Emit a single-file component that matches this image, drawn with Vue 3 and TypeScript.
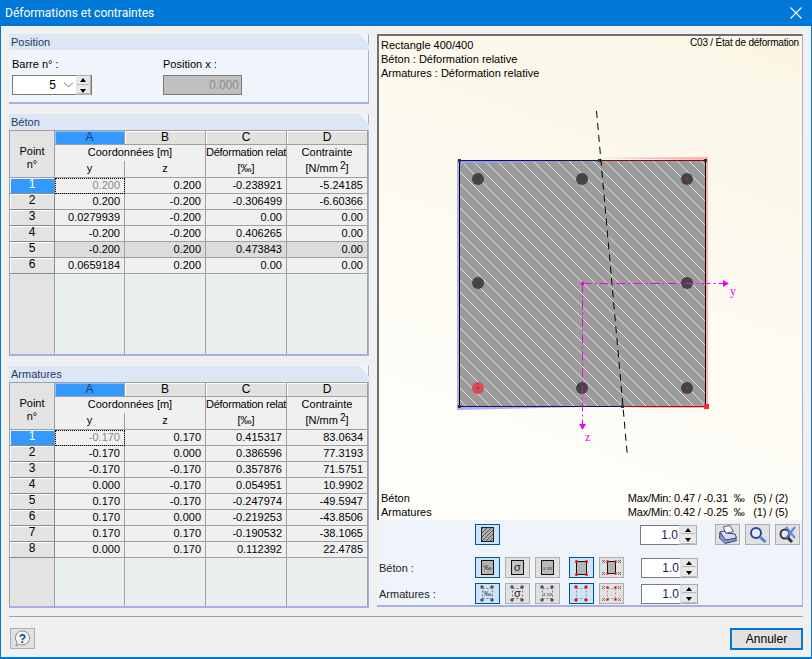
<script setup lang="ts">
type Row = string[];

const betonRows: Row[] = [
  ['0.200', '0.200', '-0.238921', '-5.24185'],
  ['0.200', '-0.200', '-0.306499', '-6.60366'],
  ['0.0279939', '-0.200', '0.00', '0.00'],
  ['-0.200', '-0.200', '0.406265', '0.00'],
  ['-0.200', '0.200', '0.473843', '0.00'],
  ['0.0659184', '0.200', '0.00', '0.00'],
];
const armatureRows: Row[] = [
  ['-0.170', '0.170', '0.415317', '83.0634'],
  ['-0.170', '0.000', '0.386596', '77.3193'],
  ['-0.170', '-0.170', '0.357876', '71.5751'],
  ['0.000', '-0.170', '0.054951', '10.9902'],
  ['0.170', '-0.170', '-0.247974', '-49.5947'],
  ['0.170', '0.000', '-0.219253', '-43.8506'],
  ['0.170', '0.170', '-0.190532', '-38.1065'],
  ['0.000', '0.170', '0.112392', '22.4785'],
];
const tables = [
  { title: 'Béton', rows: betonRows, filler: 80, shaded: 4 },
  { title: 'Armatures', rows: armatureRows, filler: 48, shaded: -1 },
];
const letters = ['B', 'C', 'D'];

const bars = [
  { x: 478, y: 179, fill: '#444', dot: '#2a2ad0' },
  { x: 582, y: 179, fill: '#444', dot: '#444' },
  { x: 687, y: 179, fill: '#444', dot: '#d02a2a' },
  { x: 478, y: 283, fill: '#444', dot: '#2a2ad0' },
  { x: 687, y: 283, fill: '#444', dot: '#555' },
  { x: 478, y: 388, fill: '#dc4a4e', dot: '#4a2ad0' },
  { x: 582, y: 388, fill: '#444', dot: '#444' },
  { x: 687, y: 388, fill: '#444', dot: '#d02a2a' },
];
const corners = [[7, 4], [17, 4], [7, 17], [17, 17]];
</script>

<template>
  <div class="window">
    <div class="titlebar">
      <span>Déformations et contraintes</span>
      <svg class="close" width="12" height="12" viewBox="0 0 12 12">
        <path d="M.5.5l11 11M11.500.5l-11 11" stroke="#fff" stroke-width="1.1" fill="none" />
      </svg>
    </div>

    <div class="content">
      <div class="left">
        <section class="panel position">
          <h2 class="head">Position</h2>
          <div class="position-body">
            <div class="field">
              <label>Barre n° :</label>
              <div class="select">
                <span class="select-value">5</span>
                <svg width="11" height="6" viewBox="0 0 11 6" class="chevron"><path d="M1 .5l4.500 4.500L10 .5" stroke="#777" fill="none" /></svg>
                <div class="spin small"><i class="up"></i><i class="down"></i></div>
              </div>
            </div>
            <div class="field">
              <label>Position x :</label>
              <div class="disabled-input">0.000</div>
            </div>
          </div>
        </section>

        <section v-for="t in tables" :key="t.title" class="panel data">
          <h2 class="head">{{ t.title }}</h2>
          <div class="table">
            <div class="corner">Point<br />n°</div>
            <div class="letter active">A</div>
            <div v-for="l in letters" :key="l" class="letter">{{ l }}</div>

            <div class="h1 span2">Coordonnées [m]</div>
            <div class="h1 tight">Déformation relat</div>
            <div class="h1">Contrainte</div>
            <div class="h2">y</div>
            <div class="h2">z</div>
            <div class="h2">[‰]</div>
            <div class="h2">[N/mm<sup>2</sup>]</div>

            <template v-for="(row, i) in t.rows" :key="i">
              <div class="rowhead" :class="{ current: i === 0 }">{{ i + 1 }}</div>
              <div
                v-for="(val, j) in row"
                :key="j"
                class="cell"
                :class="{ focus: i === 0 && j === 0, shaded: i === t.shaded }"
              >{{ val }}</div>
            </template>

            <div class="fill-head" :style="{ height: t.filler + 'px' }"></div>
            <div class="fill"></div>
            <div class="fill"></div>
            <div class="fill"></div>
            <div class="fill"></div>
          </div>
        </section>
      </div>

      <div class="right">
        <div class="canvas">
          <svg class="drawing" width="426" height="486" viewBox="377 34 426 486">
            <defs>
              <pattern id="hatch" patternUnits="userSpaceOnUse" width="12" height="12">
                <rect width="12" height="12" fill="#9b9b9b" />
                <path d="M-1-1l14 14M-1 11l2 2M11-1l2 2" stroke="#e2e2e2" stroke-width="1" />
              </pattern>
            </defs>
            <rect x="459.500" y="160.500" width="246" height="246" fill="url(#hatch)" />
            <polygon points="457,160 600,160 460,164 460,406 622,406 457,410" fill="#9a9af0" fill-opacity=".8" />
            <polygon points="600,158 708,157 708,408 622,408 705,405 705,160" fill="#ffa0a0" fill-opacity=".8" />
            <path d="M459.500 406.500V160.500" stroke="#000" fill="none" />
            <path d="M459 160.500H600" stroke="#101060" fill="none" />
            <path d="M705.500 160V406" stroke="#000" fill="none" />
            <path d="M600 160.500H705" stroke="#701010" fill="none" />
            <path d="M622 406.500H705" stroke="#a01010" fill="none" />
            <path d="M460 406.500H622" stroke="#101060" fill="none" />
            <rect x="704" y="404" width="5" height="5" fill="#f03030" />
            <g fill="#333">
              <rect x="458" y="159" width="3" height="3" />
              <rect x="704" y="159" width="3" height="3" />
              <rect x="598" y="159" width="3" height="3" />
              <rect x="621" y="405" width="3" height="3" />
              <rect x="458" y="405" width="3" height="3" />
            </g>
            <g v-for="b in bars" :key="b.x + '-' + b.y">
              <circle :cx="b.x" :cy="b.y" r="6" :fill="b.fill" />
              <circle :cx="b.x" :cy="b.y" r="1" :fill="b.dot" />
            </g>
            <path d="M596.500 111L627.500 457" stroke="#000" stroke-dasharray="7 5" fill="none" />
            <path d="M582.500 283.500H725" stroke="#f000f0" stroke-dasharray="9 3 2 3" fill="none" />
            <path d="M582.500 283.500V426" stroke="#f000f0" stroke-dasharray="9 3 2 3" fill="none" />
            <polygon points="723,280 729,283.500 723,287" fill="#f000f0" />
            <polygon points="579,424 586,424 582.500,430" fill="#f000f0" />
            <rect x="581" y="282" width="3" height="3" fill="#f000f0" />
            <text x="730" y="295" class="axis">y</text>
            <text x="585" y="441" class="axis">z</text>
          </svg>

          <div class="info">
            <div>Rectangle 400/400</div>
            <div>Béton : Déformation relative</div>
            <div>Armatures : Déformation relative</div>
          </div>
          <div class="case">C03 / État de déformation</div>

          <div class="legend">
            <div class="legend-row"><span>Béton</span><span class="minmax">Max/Min: 0.47 / -0.31 &nbsp;‰ &nbsp; (5) / (2)</span></div>
            <div class="legend-row"><span>Armatures</span><span class="minmax">Max/Min: 0.42 / -0.25 &nbsp;‰ &nbsp; (1) / (5)</span></div>
          </div>
        </div>

        <div class="controls">
          <div class="ctl-row first">
            <span class="ctl-label"></span>
            <button class="tool on">
              <svg width="23" height="19" viewBox="1 1 23 19">
                <defs>
                  <pattern id="hatch-icon" patternUnits="userSpaceOnUse" width="4" height="4">
                    <rect width="4" height="4" fill="#b0b0b0" />
                    <path d="M-1 5L5-1M-1 1l2-2M3 5l2-2" stroke="#555" />
                  </pattern>
                </defs>
                <rect x="6.500" y="3.500" width="12" height="14" fill="url(#hatch-icon)" stroke="#222" />
              </svg>
            </button>
            <div class="spinner after-one"><span>1.0</span><div class="spin"><i class="up"></i><i class="down"></i></div></div>
            <button class="tool">
              <svg width="23" height="19" viewBox="1 1 23 19">
                <path d="M8 3l7-1.500 3.500 6-7.500 2z" fill="#fafaff" stroke="#5a6090" />
                <path d="M5 8l5 7 10-2 1.500 3.500L10 19.500 4.500 14z" fill="#8f98d8" stroke="#3c4270" />
                <path d="M5 8l4-1 2 2 9 1 1.500 4-11 2z" fill="#d8dcf4" stroke="#3c4270" />
              </svg>
            </button>
            <button class="tool">
              <svg width="23" height="19" viewBox="1 1 23 19">
                <circle cx="11" cy="9" r="5" fill="#e4ecfb" stroke="#27479a" stroke-width="2" />
                <path d="M15 13l5.500 5" stroke="#4f86d8" stroke-width="3" />
              </svg>
            </button>
            <button class="tool">
              <svg width="23" height="19" viewBox="1 1 23 19">
                <circle cx="10" cy="10" r="4.500" fill="#e4ecfb" stroke="#333" stroke-width="2" />
                <path d="M13 14l4 4" stroke="#333" stroke-width="3" />
                <path d="M11 3l9 11M20 3l-9 11" stroke="#5f86dc" stroke-width="2" />
              </svg>
            </button>
          </div>

          <div class="ctl-row second">
            <span class="ctl-label">Béton :</span>
            <button class="tool on">
              <svg width="23" height="19" viewBox="1 1 23 19">
                <rect x="6.500" y="3.500" width="12" height="14" fill="#b4b4b4" stroke="#111" />
                <text x="12.500" y="13" class="mini">‰</text>
              </svg>
            </button>
            <button class="tool">
              <svg width="23" height="19" viewBox="1 1 23 19">
                <rect x="6.500" y="3.500" width="12" height="14" fill="#c4c4c4" stroke="#111" />
                <text x="12.500" y="14" class="sigma">σ</text>
              </svg>
            </button>
            <button class="tool">
              <svg width="23" height="19" viewBox="1 1 23 19">
                <rect x="6.500" y="3.500" width="12" height="14" fill="#b8b8b8" stroke="#111" />
                <text x="12.500" y="12.500" class="tiny">x.xx</text>
              </svg>
            </button>
            <button class="tool on gap-left">
              <svg width="23" height="19" viewBox="1 1 23 19">
                <rect x="7.500" y="4.500" width="10" height="13" fill="#b4b4b4" stroke="#111" />
                <g fill="#e01010">
                  <circle cx="7.500" cy="4.500" r="1.500" /><circle cx="17.500" cy="4.500" r="1.500" />
                  <circle cx="7.500" cy="17.500" r="1.500" /><circle cx="17.500" cy="17.500" r="1.500" />
                </g>
              </svg>
            </button>
            <button class="tool">
              <svg width="23" height="19" viewBox="1 1 23 19">
                <rect x="8.500" y="4.500" width="8" height="12" fill="#b4b4b4" stroke="#111" />
                <path d="M3 3l3 3M6 3L3 6M19 3l3 3M22 3l-3 3M3 15l3 3M6 15l-3 3M19 15l3 3M22 15l-3 3" stroke="#666" fill="none" />
                <g fill="#e01010">
                  <circle cx="8.500" cy="4.500" r="1.300" /><circle cx="16.500" cy="4.500" r="1.300" />
                  <circle cx="8.500" cy="16.500" r="1.300" /><circle cx="16.500" cy="16.500" r="1.300" />
                </g>
              </svg>
            </button>
            <div class="spinner after-five"><span>1.0</span><div class="spin"><i class="up"></i><i class="down"></i></div></div>
          </div>

          <div class="ctl-row third">
            <span class="ctl-label">Armatures :</span>
            <button class="tool on">
              <svg width="23" height="19" viewBox="1 1 23 19">
                <rect x="7.500" y="5.500" width="10" height="10" fill="none" stroke="#777" stroke-dasharray="2 2" />
                <g fill="#555"><circle v-for="c in corners" :key="c.join()" :cx="c[0]" :cy="c[1]" r="1.800" /></g>
                <text x="12.500" y="13" class="mini">‰</text>
              </svg>
            </button>
            <button class="tool">
              <svg width="23" height="19" viewBox="1 1 23 19">
                <rect x="7.500" y="5.500" width="10" height="10" fill="none" stroke="#777" stroke-dasharray="2 2" />
                <g fill="#555"><circle v-for="c in corners" :key="c.join()" :cx="c[0]" :cy="c[1]" r="1.800" /></g>
                <text x="12.500" y="14" class="sigma">σ</text>
              </svg>
            </button>
            <button class="tool">
              <svg width="23" height="19" viewBox="1 1 23 19">
                <rect x="7.500" y="5.500" width="10" height="10" fill="none" stroke="#777" stroke-dasharray="2 2" />
                <g fill="#555"><circle v-for="c in corners" :key="c.join()" :cx="c[0]" :cy="c[1]" r="1.800" /></g>
                <text x="12.500" y="12.500" class="tiny">x.xx</text>
              </svg>
            </button>
            <button class="tool on gap-left">
              <svg width="23" height="19" viewBox="1 1 23 19">
                <rect x="7.500" y="5.500" width="10" height="10" fill="none" stroke="#999" stroke-dasharray="2 2" />
                <g fill="#e01010"><circle v-for="c in corners" :key="c.join()" :cx="c[0]" :cy="c[1]" r="1.700" /></g>
              </svg>
            </button>
            <button class="tool">
              <svg width="23" height="19" viewBox="1 1 23 19">
                <rect x="8.500" y="5.500" width="8" height="10" fill="none" stroke="#999" stroke-dasharray="2 2" />
                <path d="M3 3l3 3M6 3L3 6M19 3l3 3M22 3l-3 3M3 15l3 3M6 15l-3 3M19 15l3 3M22 15l-3 3" stroke="#777" fill="none" />
                <g fill="#e01010">
                  <circle cx="8.500" cy="4.500" r="1.300" /><circle cx="16.500" cy="4.500" r="1.300" />
                  <circle cx="8.500" cy="16.500" r="1.300" /><circle cx="16.500" cy="16.500" r="1.300" />
                </g>
              </svg>
            </button>
            <div class="spinner after-five"><span>1.0</span><div class="spin"><i class="up"></i><i class="down"></i></div></div>
          </div>
        </div>
      </div>
    </div>

    <div class="footer">
      <button class="tool help">
        <svg width="23" height="19" viewBox="1 1 23 19">
          <path d="M12.500 3a7 7 0 1 1-3 13.300L6 18l1-3.500A7 7 0 0 1 12.500 3z" fill="#f4f4f4" stroke="#888" />
          <text x="12.500" y="14.500" class="help-mark">?</text>
        </svg>
      </button>
      <button class="cancel">Annuler</button>
    </div>
  </div>
</template>

<style>
html, body {
  margin: 0;
  background: #f0f0f0;
}
</style>

<style scoped>
.window {
  box-sizing: border-box;
  width: 812px;
  height: 659px;
  display: flex;
  flex-direction: column;
  border: solid #0078d7;
  border-width: 0 1px 2px 1px;
  background: #f0f0f0;
  font-family: "Liberation Sans", Arial, sans-serif;
  font-size: 11px;
  color: #000;
  overflow: hidden;
}
.titlebar {
  height: 26px;
  flex: none;
  display: flex;
  align-items: center;
  justify-content: space-between;
  padding: 0 9px 0 4px;
  background: #0078d7;
  color: #fff;
  font-family: Roboto, "Noto Sans", sans-serif;
  font-size: 12px;
}
.content {
  display: flex;
  gap: 8px;
  padding: 8px 8px 0 8px;
}
.left {
  width: 360px;
  display: flex;
  flex-direction: column;
  gap: 10px;
}
.panel {
  box-sizing: border-box;
  background: #f0f4fb;
  border: solid #a8aee4;
  border-width: 0 1px 2px 0;
}
.position {
  height: 70px;
}
.data {
  height: 242px;
}
.head {
  height: 16px;
  margin: 0 -1px 0 0;
  padding: 1px 0 0 2px;
  box-sizing: border-box;
  background: #dce6f5;
  clip-path: polygon(0 0, calc(100% - 10px) 0, 100% 10px, 100% 100%, 0 100%);
  font-size: 11px;
  font-weight: normal;
  line-height: 15px;
  color: #1f3a63;
}
.position-body {
  display: flex;
  gap: 71px;
  padding: 7px 0 0 3px;
}
.field label {
  display: block;
  height: 18px;
  line-height: 14px;
}
.select {
  box-sizing: border-box;
  width: 80px;
  height: 20px;
  display: flex;
  align-items: center;
  background: #fff;
  border: 1px solid #7a7a7a;
  font-size: 12px;
}
.select-value {
  width: 43px;
  text-align: right;
}
.chevron {
  margin-left: 7px;
}
.disabled-input {
  box-sizing: border-box;
  width: 79px;
  height: 20px;
  line-height: 18px;
  text-align: right;
  padding-right: 2px;
  background: #c0c0c0;
  border: 1px solid #7a7a7a;
  color: #8c8c8c;
  font-size: 12px;
}
.table {
  display: grid;
  grid-template-columns: 45px 70px 81px 81px 81px;
  grid-template-rows: 14px 16px 17px;
  grid-auto-rows: minmax(16px, auto);
  width: 359px;
  border: solid #a0a0a0;
  border-width: 1px 0 0 1px;
  box-sizing: border-box;
  background: #f0f0f0;
}
.table > div {
  box-sizing: border-box;
  min-width: 0;
  white-space: nowrap;
}
.corner {
  grid-row: 1 / span 3;
  background: #e3e3e3;
  border-right: 1px solid #a0a0a0;
  border-bottom: 1px solid #a0a0a0;
  text-align: center;
  padding-top: 14px;
  line-height: 13px;
}
.letter {
  background: #e1e1e1;
  border: solid #a0a0a0;
  border-width: 0 1px 1px 0;
  box-shadow: inset 1px 1px 0 #fff;
  text-align: center;
  line-height: 13px;
  font-size: 12px;
}
.letter.active {
  background: #3399ff;
  box-shadow: inset 1px 1px 0 #8cc4ff;
  color: #1a3f70;
}
.h1, .h2 {
  text-align: center;
  border-right: 1px solid #a0a0a0;
  line-height: 15px;
}
.tight {
  letter-spacing: -.25px;
}
.span2 {
  grid-column: span 2;
}
.h2 {
  border-bottom: 1px solid #a0a0a0;
}
sup {
  font-size: 10px;
  line-height: 0;
  vertical-align: 3px;
  margin-left: 2px;
}
.rowhead {
  background: #e3e3e3;
  border: solid #8a8a8a;
  border-width: 0 1px 1px 0;
  box-shadow: inset 1px 1px 0 #fff;
  text-align: center;
  line-height: 13px;
  font-size: 12px;
}
.rowhead.current {
  background: #3399ff;
  color: #fff;
  box-shadow: inset 1px 1px 0 #f0f0f0;
}
.cell {
  text-align: right;
  padding-right: 4px;
  border: solid #a0a0a0;
  border-width: 0 1px 1px 0;
  line-height: 15px;
}
.cell.shaded {
  background: #dcdcdc;
}
.cell.focus {
  color: #8a8a8a;
  outline: 1px dotted #000;
  outline-offset: -1px;
}
.fill-head {
  background: #e3e3e3;
  border-right: 1px solid #a0a0a0;
}
.fill {
  background: #e9efef;
  border-right: 1px solid #a0a0a0;
}
.right {
  width: 426px;
  display: flex;
  flex-direction: column;
}
.canvas {
  position: relative;
  height: 486px;
  box-sizing: border-box;
  padding: 4px 0 0 4px;
  background: linear-gradient(200deg, #faf5e4 0%, #fdfbf3 55%, #fffefb 100%);
  box-shadow: inset 2px 2px 0 #6f6f6f;
  border-right: 1px solid #a8aee4;
  display: flex;
  flex-direction: column;
  line-height: 14px;
}
.drawing {
  position: absolute;
  left: 0;
  top: 0;
}
.info, .legend {
  position: relative;
}
.case {
  position: absolute;
  top: 3px;
  right: 3px;
  font-size: 10px;
  line-height: 12px;
  letter-spacing: -.2px;
}
.legend {
  margin-top: auto;
  padding-right: 14px;
  padding-bottom: 1px;
}
.legend-row {
  display: flex;
  justify-content: space-between;
}
.minmax {
  letter-spacing: -.15px;
}
.axis {
  fill: #f000f0;
  font-family: "Liberation Serif", serif;
  font-size: 12px;
}
.controls {
  box-sizing: border-box;
  height: 87px;
  padding-top: 4px;
  background: #eff3fa;
  border: solid #a8aee4;
  border-width: 0 1px 2px 0;
}
.ctl-row {
  display: flex;
  height: 21px;
  align-items: center;
  padding-left: 2px;
}
.second {
  margin-top: 12px;
}
.third {
  margin-top: 5px;
}
.ctl-label {
  width: 96px;
  flex: none;
  color: #222;
}
.tool {
  box-sizing: border-box;
  width: 25px;
  height: 21px;
  flex: none;
  padding: 0;
  margin: 0 5px 0 0;
  background: #e1e1e1;
  border: 1px solid #adadad;
  display: block;
}
.tool svg {
  display: block;
}
.tool.on {
  background: #cce4f7;
  border-color: #005499;
}
.gap-left {
  margin-left: 4px;
}
.spinner {
  box-sizing: border-box;
  width: 57px;
  height: 20px;
  display: flex;
  flex: none;
  background: #fff;
  border: solid #7a7a7a;
  border-width: 1px 0 1px 1px;
  font-size: 12px;
}
.spinner span {
  flex: 1;
  text-align: right;
  line-height: 18px;
  padding-right: 1px;
  color: #1a1a60;
}
.after-one {
  margin-left: 135px;
  margin-right: 18px;
}
.after-five {
  margin-left: 12px;
}
.spin {
  width: 18px;
  display: flex;
  flex-direction: column;
  gap: 1px;
  padding: 0 1px 0 2px;
  margin: -1px 0;
  background: #e1e1e1;
  border: solid #adadad;
  border-width: 1px 1px 1px 0;
  box-sizing: border-box;
  height: 20px;
}
.spin.small {
  width: 15px;
  margin-left: auto;
  padding: 0 1px;
}
.spin i {
  flex: 1;
  position: relative;
  background: #e9e9e9;
  border-bottom: 1px solid #bbb;
}
.spin i::after {
  content: "";
  position: absolute;
  left: calc(50% - 3px);
  top: 2px;
  border: 3px solid transparent;
}
.spin .up::after {
  top: -1px;
  border-bottom: 4px solid #000;
}
.spin .down::after {
  top: 3px;
  border-top: 4px solid #000;
}
.mini, .sigma, .tiny, .help-mark {
  text-anchor: middle;
  font-family: "Liberation Sans", sans-serif;
}
.mini {
  font-size: 8px;
  fill: #333;
}
.sigma {
  font-size: 11px;
  fill: #222;
}
.tiny {
  font-size: 5px;
  fill: #333;
}
.help-mark {
  font-size: 12px;
  font-weight: bold;
  fill: #24408f;
}
.footer {
  flex: none;
  margin: 8px 8px 0 8px;
  padding: 11px 0 0 1px;
  border-top: 1px solid #a0a0a0;
  display: flex;
  justify-content: space-between;
  align-items: flex-start;
}
.help {
  margin: 0;
}
.cancel {
  box-sizing: border-box;
  width: 73px;
  height: 22px;
  padding: 0;
  background: #e1e1e1;
  border: 2px solid #0078d7;
  font: 12px "Liberation Sans", Arial, sans-serif;
  color: #000;
}
</style>
